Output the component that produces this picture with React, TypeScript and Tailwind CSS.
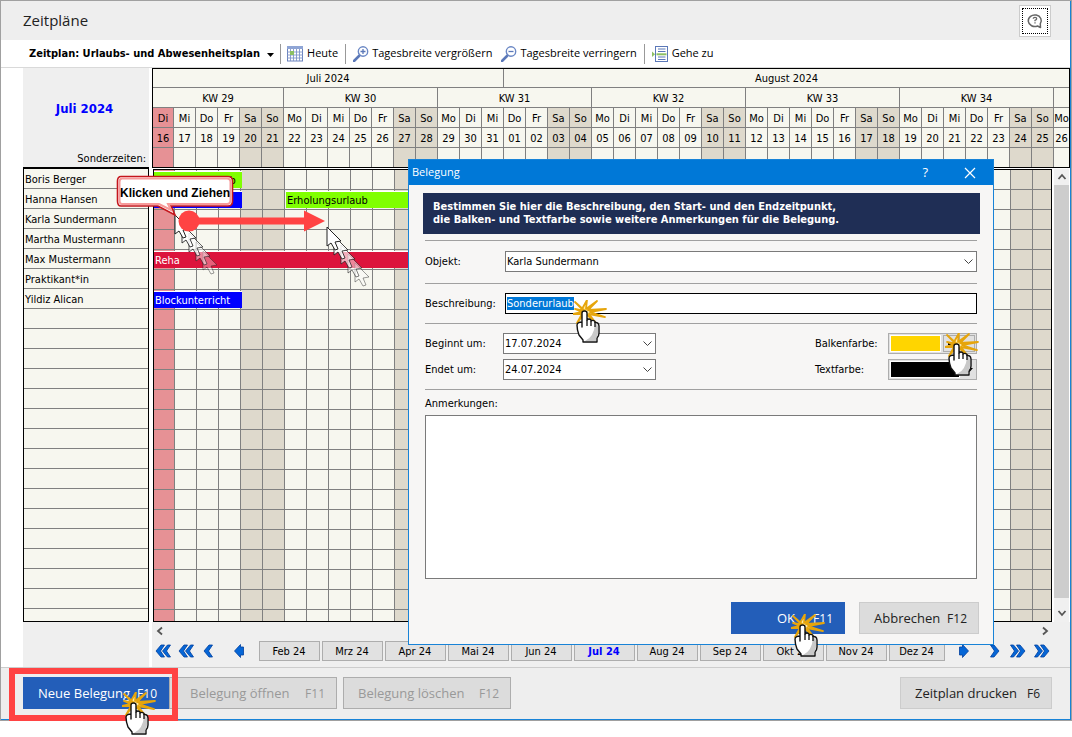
import React, { useEffect, useRef } from "react";

const WEEKDAYS = ["Mo", "Di", "Mi", "Do", "Fr", "Sa", "So"];
const PEOPLE = ["Boris Berger", "Hanna Hansen", "Karla Sundermann", "Martha Mustermann", "Max Mustermann", "Praktikant*in", "Yildiz Alican"];
const MONTHS = ["Feb 24", "Mrz 24", "Apr 24", "Mai 24", "Jun 24", "Jul 24", "Aug 24", "Sep 24", "Okt 24", "Nov 24", "Dez 24"];
const WEEKS = [29, 30, 31, 32, 33, 34];
const DAYS = Array.from({ length: 42 }, (_, i) => {
  const n = 16 + i;
  return {
    name: WEEKDAYS[(i + 1) % 7],
    num: String(n > 31 ? n - 31 : n).padStart(2, "0"),
    weekend: (i + 1) % 7 > 4,
    today: i === 0,
  };
});
const ROWS = Array.from({ length: 23 }, (_, i) => i);

function dayColor(d: { weekend: boolean; today: boolean }) {
  return d.today ? "bg-[#e69195]" : d.weekend ? "bg-[#ded9cc]" : "bg-[#f7f7ef]";
}

function Columns({ count }: { count: number }) {
  return (
    <colgroup>
      {DAYS.slice(0, count).map((_, i) => (
        <col key={i} className={i === 0 ? "w-[21px]" : i === count - 1 ? "w-auto" : "w-[22px]"} />
      ))}
    </colgroup>
  );
}

function ClickHand() {
  return (
    <svg width="34" height="44" viewBox="0 0 34 44" aria-hidden="true">
      <path
        d="M12 11 L2 2 L9 9 L14 0 L13 9 L24 1 L15 10 L33 9 L17 12 L32 17 L16 14 L22 22 L12 13 L4 23 L9 14 L0 14 L9 12 L2 9 Z"
        fill="#ffe9a0"
        stroke="#e6a50c"
        strokeWidth="1.8"
        strokeLinejoin="round"
      />
      <path
        d="M9 27 V13 Q9 11 11.5 11 Q14 11 14 13 V20 Q16 18 18 20 V21 Q20 19.500 22 21.500 V22.500 Q25.500 22 26 26 V33 Q26 36 24 38 V42 H10 V40 L6 35 Q4 30 4 25 Q4.500 22 9 22 Z"
        fill="#fff"
        stroke="#111"
        strokeWidth="1.4"
        strokeLinejoin="round"
      />
      <path d="M22 24 Q25 24 25 27 V33 Q25 36 23 38 V41 H12 Q21 37 22 24" fill="#c9c9c9" />
      <path d="M14 20 V26 M18 21 V26 M22 22 V27" stroke="#111" strokeWidth="1.3" fill="none" />
    </svg>
  );
}

const POINTER = "M0 0 V19 L4 16 L8 23 L11 22 L8 15 L14 14 Z";

function PointerTrail() {
  return (
    <svg width="46" height="64" viewBox="-1 -1 46 64" aria-hidden="true">
      {[4, 3, 2, 1, 0].map((i) => (
        <path
          key={i}
          d={POINTER}
          transform={`translate(${i * 7} ${i * 9})`}
          fill="#fff"
          fillOpacity={1 - i * 0.17}
          stroke="#222"
          strokeOpacity={1 - i * 0.14}
        />
      ))}
    </svg>
  );
}

function Chevron({ dir, count }: { dir: "left" | "right"; count: number }) {
  return (
    <svg
      width={count === 2 ? 16 : 10}
      height="14"
      viewBox={count === 2 ? "0 0 16 14" : "0 0 10 14"}
      className={dir === "right" ? "rotate-180" : ""}
      aria-hidden="true"
    >
      <path d="M1 7 L6 1 H9.500 L5.500 7 L9.500 13 H6 Z" fill="#0566d6" stroke="#003f9e" strokeWidth="0.8" />
      {count === 2 && <path d="M7.500 7 L12.500 1 H15.500 L11.500 7 L15.500 13 H12.500 Z" fill="#0566d6" stroke="#003f9e" strokeWidth="0.8" />}
    </svg>
  );
}

function StepArrow({ dir }: { dir: "left" | "right" }) {
  return (
    <svg width="11" height="14" viewBox="0 0 11 14" className={dir === "right" ? "rotate-180" : ""} aria-hidden="true">
      <path d="M0.500 7 L6.500 0.500 V3 H9.500 V11 H6.500 V13.500 Z" fill="#0566d6" stroke="#003f9e" strokeWidth="0.8" />
    </svg>
  );
}

function ThinChevron({ d }: { d: string }) {
  return (
    <svg width="10" height="10" viewBox="0 0 10 10" aria-hidden="true">
      <path d={d} fill="none" stroke="#555" strokeWidth="1.8" />
    </svg>
  );
}

function Magnifier({ plus }: { plus: boolean }) {
  return (
    <svg width="16" height="16" viewBox="0 0 16 16" aria-hidden="true">
      <path d="M1 15 L6 10" stroke="#5b78b8" strokeWidth="2.600" strokeLinecap="round" />
      <circle cx="10" cy="5.500" r="4.700" fill="#fff" stroke="#6a87c4" strokeWidth="1.400" />
      <path d={plus ? "M7.500 5.500 H12.500 M10 3 V8" : "M7.500 5.500 H12.500"} stroke="#5b78b8" strokeWidth="1.300" />
    </svg>
  );
}

function Select({ id, value, className }: { id: string; value: string; className: string }) {
  return (
    <div className={`relative ${className}`}>
      <select id={id} defaultValue={value} className="block h-[21px] w-full appearance-none border border-[#7a7a7a] bg-white pr-5 pl-px leading-4 outline-none">
        <option>{value}</option>
      </select>
      <svg className="pointer-events-none absolute top-2 right-1" width="9" height="6" viewBox="0 0 9 6" aria-hidden="true">
        <path d="M0.500 0.500 L4.500 4.500 L8.500 0.500" fill="none" stroke="#444" />
      </svg>
    </div>
  );
}

function ActionButton({ label, hotkey, className }: { label: string; hotkey: string; className: string }) {
  return (
    <button className={`flex h-8 items-center font-['Open_Sans','Noto_Sans',sans-serif] text-[12px] ${className}`}>
      <span className="text-[13px] font-medium">{label}</span>
      <span>{hotkey}</span>
    </button>
  );
}

function Toolbar() {
  return (
    <div className="flex h-7 items-center border-b border-[#d9d9d9] bg-white pl-7 font-['Open_Sans','Noto_Sans',sans-serif] text-[11px]">
      <button className="flex items-center gap-[7px] pt-0.5 font-['DejaVu_Sans_Condensed','DejaVu_Sans',sans-serif] font-bold">
        Zeitplan: Urlaubs- und Abwesenheitsplan
        <svg width="7" height="4" viewBox="0 0 7 4" aria-hidden="true">
          <path d="M0 0 H7 L3.500 4 Z" />
        </svg>
      </button>
      <span className="ml-1.5 h-5 w-px bg-[#999]" />
      <button className="ml-1.5 flex items-center gap-1">
        <svg width="16" height="16" viewBox="0 0 16 16" aria-hidden="true">
          <rect x="0.500" y="0.500" width="15" height="14.500" fill="#fff" stroke="#6a82bd" />
          <path d="M0 1.500 H16" stroke="#8fa5d5" strokeWidth="3" />
          <path d="M0 6 H16 M0 9 H16 M0 12 H16 M3.500 3 V15 M6.500 3 V15 M9.500 3 V15 M12.500 3 V15" stroke="#7f95cb" strokeWidth="0.900" />
          <rect x="3" y="5" width="4" height="4" fill="#8dc063" />
        </svg>
        Heute
      </button>
      <span className="ml-[7px] h-5 w-px bg-[#999]" />
      <button className="ml-[7px] flex items-center gap-[3px]">
        <Magnifier plus />
        Tagesbreite vergrößern
      </button>
      <button className="ml-[9px] flex items-center gap-[3px]">
        <Magnifier plus={false} />
        Tagesbreite verringern
      </button>
      <span className="ml-[7px] h-5 w-px bg-[#999]" />
      <button className="ml-[7px] flex items-center gap-1">
        <svg width="16" height="16" viewBox="0 0 16 16" aria-hidden="true">
          <rect x="3.500" y="0.500" width="12" height="15" fill="#fff" stroke="#5b78b8" />
          <path d="M6 3 H13.500 M6 5.500 H13.500 M6 11 H13.500 M6 13.500 H13.500" stroke="#5b78b8" />
          <path d="M4.500 8.300 H14.500" stroke="#8dc063" strokeWidth="2" />
          <path d="M0 5.500 L3 8.300 L0 11 Z" fill="#8dc063" />
        </svg>
        Gehe zu
      </button>
    </div>
  );
}

function CalendarHead() {
  const cell = "border-r border-b border-[#808080] p-0 pt-0.5 font-normal text-center overflow-hidden whitespace-nowrap";
  return (
    <div className="border border-black bg-[#f7f7ef]">
      <table className="w-full table-fixed border-separate border-spacing-0 leading-4">
        <Columns count={42} />
        <thead>
          <tr className="h-[19px]">
            <th colSpan={16} className={cell}>Juli 2024</th>
            <th colSpan={26} className={`${cell} border-r-0`}>August 2024</th>
          </tr>
          <tr className="h-5">
            {WEEKS.map((w, i) => (
              <th key={w} colSpan={i === 0 ? 6 : 7} className={cell}>KW {w}</th>
            ))}
            <th className={`${cell} border-r-0`} />
          </tr>
          <tr className="h-5">
            {DAYS.map((d, i) => (
              <th key={i} className={`${cell} ${dayColor(d)} ${i === 41 ? "border-r-0" : ""}`}>{d.name}</th>
            ))}
          </tr>
          <tr className="h-5">
            {DAYS.map((d, i) => (
              <th key={i} className={`${cell} ${dayColor(d)} ${i === 41 ? "border-r-0" : ""}`}>{d.num}</th>
            ))}
          </tr>
          <tr className="h-[19px]">
            {DAYS.map((d, i) => (
              <th key={i} className={`border-r border-[#808080] p-0 ${dayColor(d)} ${i === 41 ? "border-r-0" : ""}`} />
            ))}
          </tr>
        </thead>
      </table>
    </div>
  );
}

function CalendarBody() {
  const bar = "absolute h-[17px] border-t border-white px-px leading-[17px] whitespace-nowrap";
  return (
    <div className="relative ml-px min-w-0 flex-1 overflow-hidden border border-black">
      <table className="w-full table-fixed border-separate border-spacing-0">
        <Columns count={41} />
        <tbody>
          {ROWS.map((r) => (
            <tr key={r} className={r === 22 ? "h-[11px]" : "h-5"}>
              {DAYS.slice(0, 41).map((d, i) => (
                <td
                  key={i}
                  className={`p-0 border-[#808080] ${dayColor(d)} ${i === 40 ? "" : "border-r"} ${r === 22 ? "" : "border-b"}`}
                />
              ))}
            </tr>
          ))}
        </tbody>
      </table>
      <div className={`${bar} top-px left-0 w-[88px] bg-[#80ff00]`}>Erholungsurlaub</div>
      <div className={`${bar} top-[21px] left-0 w-[88px] bg-[#0000ff]`} />
      <div className={`${bar} top-[21px] left-[132px] w-[154px] bg-[#80ff00]`}>Erholungsurlaub</div>
      <div className={`${bar} top-[81px] left-0 w-[308px] bg-[#dc143c] text-white`}>Reha</div>
      <div className={`${bar} top-[121px] left-0 w-[88px] bg-[#0000ff] text-white`}>Blockunterricht</div>

      <div className="absolute top-11 left-5"><PointerTrail /></div>
      <svg className="absolute top-[39px] left-6" width="148" height="24" viewBox="0 0 148 24" aria-hidden="true">
        <circle cx="11" cy="12" r="10.500" fill="#ff4343" />
        <path d="M11 8.500 H126 V1.500 L147 12 L126 22.500 V15.500 H11 Z" fill="#ff4343" />
      </svg>
      <div className="absolute top-14 left-[172px]"><PointerTrail /></div>
    </div>
  );
}

function Callout() {
  return (
    <div className="absolute top-[107px] left-[93px] h-[42px] w-[118px] font-['Liberation_Sans',Arial,sans-serif] text-[12px] font-bold">
      <svg className="absolute inset-0" width="118" height="42" viewBox="0 0 118 42" aria-hidden="true">
        <path
          d="M5 1.500 H112 Q116.500 1.500 116.500 6 V26 Q116.500 31 112 31 H55 L59 40 L42 31 H5 Q1.500 31 1.500 26 V6 Q1.500 1.500 5 1.500 Z"
          fill="#fff"
          stroke="#c4161c"
          strokeWidth="1.600"
        />
        <path
          d="M6 3.500 H111 Q114.500 3.500 114.500 7 V25 Q114.500 29 111 29 H52 L55 35 L43 29 H6 Q3.500 29 3.500 25 V7 Q3.500 3.500 6 3.500 Z"
          fill="none"
          stroke="#f79a9a"
          strokeWidth="2"
        />
      </svg>
      <span className="relative block pt-[10px] text-center leading-4 whitespace-nowrap">Klicken und Ziehen</span>
    </div>
  );
}

function ColorPicker({ label, color, split }: { label: string; color: string; split?: boolean }) {
  return (
    <div className="flex h-[21px] items-center">
      <span className="w-[73px] pt-0.5">{label}</span>
      <button aria-label={label} className="relative flex h-[21px] w-[89px] items-center border border-[#adadad] bg-[#e1e1e1] p-px">
        <span className={`h-[17px] border border-white ${split ? "w-[52px]" : "w-[70px]"} ${color}`} />
        {split ? (
          <>
            <span className="ml-0.5 flex h-[17px] w-4 items-center justify-center border border-[#adadad]">
              <span className="h-0.5 w-1.5 bg-black" />
            </span>
            <span className="h-[17px] w-4 border border-[#adadad]" />
            <span className="absolute -top-px left-14 z-10"><ClickHand /></span>
          </>
        ) : (
          <svg className="ml-1.5" width="7" height="4" viewBox="0 0 7 4" aria-hidden="true">
            <path d="M0 0 H7 L3.500 4 Z" />
          </svg>
        )}
      </button>
    </div>
  );
}

function BookingDialog() {
  const inputRef = useRef<HTMLInputElement>(null);
  useEffect(() => {
    inputRef.current?.focus();
    inputRef.current?.select();
  }, []);
  const line = "border-t border-[#a0a0a0]";
  return (
    <div role="dialog" aria-label="Belegung" className="absolute top-[159px] left-[408px] w-[586px] border border-[#1883d7] bg-[#f7f6f5]">
      <div className="flex h-[25px] items-center bg-[#0078d7] pr-[17px] pl-[3px] font-['Open_Sans','Noto_Sans',sans-serif] text-[12px] text-white">
        <span className="flex-1 text-[11px]">Belegung</span>
        <button className="mr-[36px] text-[13px]">?</button>
        <button aria-label="Schließen">
          <svg width="12" height="12" viewBox="0 0 12 12" aria-hidden="true">
            <path d="M1 1 L11 11 M11 1 L1 11" stroke="#fff" strokeWidth="1.200" />
          </svg>
        </button>
      </div>
      <div className="px-4 pt-2">
        <p className="-ml-0.5 -mr-[3px] bg-[#1f2e55] pt-[7px] pb-2 pl-[10px] text-[11px] leading-[13px] font-bold text-white">
          Bestimmen Sie hier die Beschreibung, den Start- und den Endzeitpunkt,
          <br />
          die Balken- und Textfarbe sowie weitere Anmerkungen für die Belegung.
        </p>
        <div className={`mt-[6px] flex items-center pt-[10px] pb-[11px] ${line}`}>
          <label htmlFor="objekt" className="w-20 pt-0.5">Objekt:</label>
          <Select id="objekt" value="Karla Sundermann" className="flex-1" />
        </div>
        <div className={`relative flex items-center pt-[9px] pb-[9px] ${line}`}>
          <label htmlFor="beschreibung" className="w-20 pt-0.5">Beschreibung:</label>
          <input
            id="beschreibung"
            ref={inputRef}
            defaultValue="Sonderurlaub"
            className="h-[21px] min-w-0 flex-1 border border-black bg-white px-px outline-none selection:bg-[#0078d7] selection:text-white"
          />
          <span className="pointer-events-none absolute top-4 left-[148px] z-10"><ClickHand /></span>
        </div>
        <div className={`flex justify-between pt-[9px] pb-[9px] ${line}`}>
          <div className="flex flex-col gap-[5px]">
            <div className="flex items-center">
              <label htmlFor="beginn" className="w-[78px] pt-0.5">Beginnt um:</label>
              <Select id="beginn" value="17.07.2024" className="w-[153px]" />
            </div>
            <div className="flex items-center">
              <label htmlFor="ende" className="w-[78px] pt-0.5">Endet um:</label>
              <Select id="ende" value="24.07.2024" className="w-[153px]" />
            </div>
          </div>
          <div className="flex flex-col gap-[5px]">
            <ColorPicker label="Balkenfarbe:" color="bg-[#ffd500]" split />
            <ColorPicker label="Textfarbe:" color="bg-black" />
          </div>
        </div>
        <div className={`pt-[6px] ${line}`}>
          <label htmlFor="anmerkungen" className="block leading-4">Anmerkungen:</label>
          <textarea id="anmerkungen" className="mt-[3px] block h-[164px] w-full resize-none border border-[#7a7a7a] bg-white outline-none" />
        </div>
      </div>
      <div className="flex justify-end gap-[14px] pt-[23px] pr-[14px] pb-[10px]">
        <div className="relative">
          <ActionButton label="OK" hotkey="F11" className="w-[114px] justify-end gap-[18px] bg-[#235eb9] pt-px pr-3 text-white" />
          <span className="pointer-events-none absolute top-3 left-[60px] z-10"><ClickHand /></span>
        </div>
        <ActionButton label="Abbrechen" hotkey="F12" className="w-[120px] justify-between border border-[#ccc] bg-[#dcdcdc] pt-px pr-[11px] pl-[14px] text-[#222]" />
      </div>
    </div>
  );
}

function MonthNavigation() {
  return (
    <div className="bg-[#efefef]">
      <div className="flex h-[19px] items-center justify-between pr-[20px] pb-0.5 pl-[3px]">
        <button aria-label="Nach links"><ThinChevron d="M7 1.500 L3 5 L7 8.500" /></button>
        <button aria-label="Nach rechts"><ThinChevron d="M3 1.500 L7 5 L3 8.500" /></button>
      </div>
      <div className="flex h-[26px] items-start justify-between pr-[20px] pl-[3px]">
        <div className="flex h-5 items-center">
          <button aria-label="Jahr zurück"><Chevron dir="left" count={2} /></button>
          <button aria-label="Quartal zurück" className="ml-[7px]"><Chevron dir="left" count={2} /></button>
          <button aria-label="Monat zurück" className="ml-[9px]"><Chevron dir="left" count={1} /></button>
          <button aria-label="Tag zurück" className="ml-[21px]"><StepArrow dir="left" /></button>
        </div>
        <div className="flex gap-0.5">
          {MONTHS.map((m, i) => (
            <button
              key={m}
              className={`h-5 border border-[#adadad] bg-[#e1e1e1] pt-0.5 leading-4 ${i === 10 ? "w-14" : "w-[61px]"} ${m === "Jul 24" ? "font-bold text-[#0000ff]" : ""}`}
            >
              {m}
            </button>
          ))}
        </div>
        <div className="flex h-5 items-center">
          <button aria-label="Tag vor"><StepArrow dir="right" /></button>
          <button aria-label="Monat vor" className="ml-[21px]"><Chevron dir="right" count={1} /></button>
          <button aria-label="Quartal vor" className="ml-[10px]"><Chevron dir="right" count={2} /></button>
          <button aria-label="Jahr vor" className="ml-2"><Chevron dir="right" count={2} /></button>
        </div>
      </div>
    </div>
  );
}

export default function App() {
  return (
    <div className="relative w-full bg-white pb-4 font-['DejaVu_Sans_Condensed','DejaVu_Sans',sans-serif] text-[11px] text-black">
      <div className="border border-[#a0a0a0]">
        <div className="border-r border-b border-[#1883d7]">
          <header className="flex h-[39px] items-center justify-between bg-[#eee] pr-[19px] pl-[22px]">
            <h1 className="font-['Open_Sans','Noto_Sans',sans-serif] text-[15px] font-medium text-[#222]">Zeitpläne</h1>
            <button aria-label="Hilfe" className="border border-[#ccc] bg-white p-0.5">
              <span className="flex h-[26px] w-[26px] items-center justify-center border border-dotted border-black">
                <svg width="16" height="16" viewBox="0 0 16 16" fill="none" stroke="#666" aria-hidden="true">
                  <path d="M10.500 13 A6.500 5.800 0 1 1 13.300 10.800 L13.500 14.500 Z" strokeWidth="1.500" strokeLinejoin="round" />
                  <path d="M6.300 5.800 Q6.300 4.300 8 4.300 Q9.700 4.300 9.700 5.700 Q9.700 6.600 8 7.400 V8.300 M8 9.300 V10.500" strokeWidth="1.300" />
                </svg>
              </span>
            </button>
          </header>
          <Toolbar />
          <main className="flex pl-[22px]">
            <div className="relative w-[126px] shrink-0 bg-[#efefef]">
              <div className="flex h-[99px] flex-col justify-between pt-[33px] pr-[3px]">
                <h2 className="text-center text-[13px] leading-4 font-bold text-[#0000ff]">Juli 2024</h2>
                <span className="text-right leading-4">Sonderzeiten:</span>
              </div>
              <ul className="border border-t-2 border-black bg-[#f7f7ef]">
                {ROWS.map((r) => (
                  <li key={r} className={`pt-px pl-px leading-[19px] ${r === 22 ? "h-3" : "h-5 border-b border-[#808080]"}`}>
                    {PEOPLE[r]}
                  </li>
                ))}
              </ul>
              <div className="absolute top-0 left-0 z-10"><Callout /></div>
            </div>
            <div className="ml-[3px] min-w-0 flex-1">
              <CalendarHead />
              <div className="flex pt-px">
                <CalendarBody />
                <div className="mr-px ml-0.5 flex w-[15px] flex-col items-center bg-[#f0f0f0]">
                  <button aria-label="Nach oben" className="flex h-4 items-center"><ThinChevron d="M1.500 7 L5 3 L8.500 7" /></button>
                  <div className="w-full flex-1 bg-[#cdcdcd]" />
                  <button aria-label="Nach unten" className="flex h-6 items-end pb-1"><ThinChevron d="M1.500 3 L5 7 L8.500 3" /></button>
                </div>
              </div>
              <MonthNavigation />
            </div>
          </main>
          <footer className="flex border-t border-[#ccc] bg-[#eee] pt-[9px] pr-[18px] pb-[10px] pl-[22px]">
            <div className="relative">
              <ActionButton label="Neue Belegung" hotkey="F10" className="w-[146px] justify-between bg-[#235eb9] pt-px pr-3 pl-[15px] text-white" />
              <span className="pointer-events-none absolute -top-[9px] -left-[14px] z-10 h-[53px] w-[169px] border-[6px] border-[#ff4343]" />
              <span className="pointer-events-none absolute top-[15px] left-[99px] z-20"><ClickHand /></span>
            </div>
            <ActionButton label="Belegung öffnen" hotkey="F11" className="w-[168px] justify-between border border-[#adadad] bg-[#dcdcdc] pt-px pr-[11px] pl-5 text-[#999]" />
            <ActionButton label="Belegung löschen" hotkey="F12" className="ml-1.5 w-[168px] justify-between border border-[#adadad] bg-[#dcdcdc] pt-px pr-[11px] pl-[14px] text-[#999]" />
            <ActionButton label="Zeitplan drucken" hotkey="F6" className="ml-auto w-[152px] justify-between border border-[#ccc] bg-[#dcdcdc] pt-px pr-[11px] pl-[14px] text-[#222]" />
          </footer>
        </div>
      </div>
      <BookingDialog />
    </div>
  );
}
